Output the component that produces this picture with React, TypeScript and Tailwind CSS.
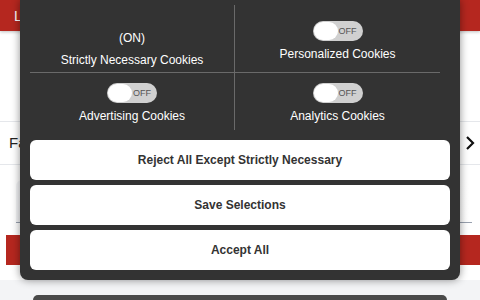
import React from "react"

function Toggle() {
  return (
    <div className="relative w-[50px] h-[20px] rounded-full bg-[#d0d0d0] flex items-center">
      <div className="absolute left-[1px] top-[1px] w-[24px] h-[18px] rounded-full bg-white" />
      <span className="ml-auto mr-[6px] text-[9px] leading-none text-[#555]">OFF</span>
    </div>
  )
}

export default function App() {
  const buttons = ["Reject All Except Strictly Necessary", "Save Selections", "Accept All"]

  return (
    <div className="relative w-[480px] h-[300px] overflow-hidden bg-white font-['Liberation_Sans',Arial,sans-serif]">
      {/* page behind the dialog */}
      <div className="flex flex-col h-full">
        <div className="h-[31px] bg-[#b5271f] shadow-[0_1px_3px_rgba(0,0,0,0.25)] flex items-center pl-[14px] text-white text-sm">
          L
        </div>
        <div className="h-[91px] border-b border-gray-200" />
        <div className="h-[43px] border-b border-gray-200 flex items-center justify-between pl-[9px] pr-[5px] text-[15px] text-[#222]">
          <span>Fa</span>
          <svg width="10" height="16" viewBox="0 0 10 16" fill="none" stroke="#111" strokeWidth="2.2">
            <path d="M2 2l6 6-6 6" />
          </svg>
        </div>
        <div className="h-[15px]" />
        <div className="h-[43px] mx-[16px] mr-[8px] bg-gradient-to-r from-gray-100 to-white border-b border-gray-400 rounded-t-md" />
        <div className="h-[12px]" />
        <div className="h-[30px] ml-[6px] bg-[#b5271f]" />
        <div className="h-[15px]" />
        <div className="flex-1 bg-gray-100 flex items-end">
          <div className="mx-[33px] w-full h-[5px] bg-[#4a4a4a] rounded-t-md" />
        </div>
      </div>

      {/* cookie preferences dialog */}
      <div className="absolute top-0 left-[20px] w-[440px] h-[280px] bg-[#333] rounded-b-lg shadow-[0_0_8px_rgba(0,0,0,0.45)] px-[10px] pt-[5px] text-[12px] leading-4 text-white">
        <div className="grid grid-cols-2 w-[410px]">
          <div className="h-[68px] border-r border-b border-[#6a6a6a] flex flex-col items-center pt-[25px] gap-[6px]">
            <span>(ON)</span>
            <span>Strictly Necessary Cookies</span>
          </div>
          <div className="h-[68px] border-b border-[#6a6a6a] flex flex-col items-center pt-[16px] gap-[5px]">
            <Toggle />
            <span>Personalized Cookies</span>
          </div>
          <div className="h-[57px] border-r border-[#6a6a6a] flex flex-col items-center pt-[10px] gap-[5px]">
            <Toggle />
            <span>Advertising Cookies</span>
          </div>
          <div className="h-[57px] flex flex-col items-center pt-[10px] gap-[5px]">
            <Toggle />
            <span>Analytics Cookies</span>
          </div>
        </div>

        <div className="mt-[10px] flex flex-col gap-[5px]">
          {buttons.map((label) => (
            <button
              key={label}
              className="h-[40px] w-full rounded-md bg-white text-[#333] font-bold text-[12px]"
            >
              {label}
            </button>
          ))}
        </div>
      </div>
    </div>
  )
}
